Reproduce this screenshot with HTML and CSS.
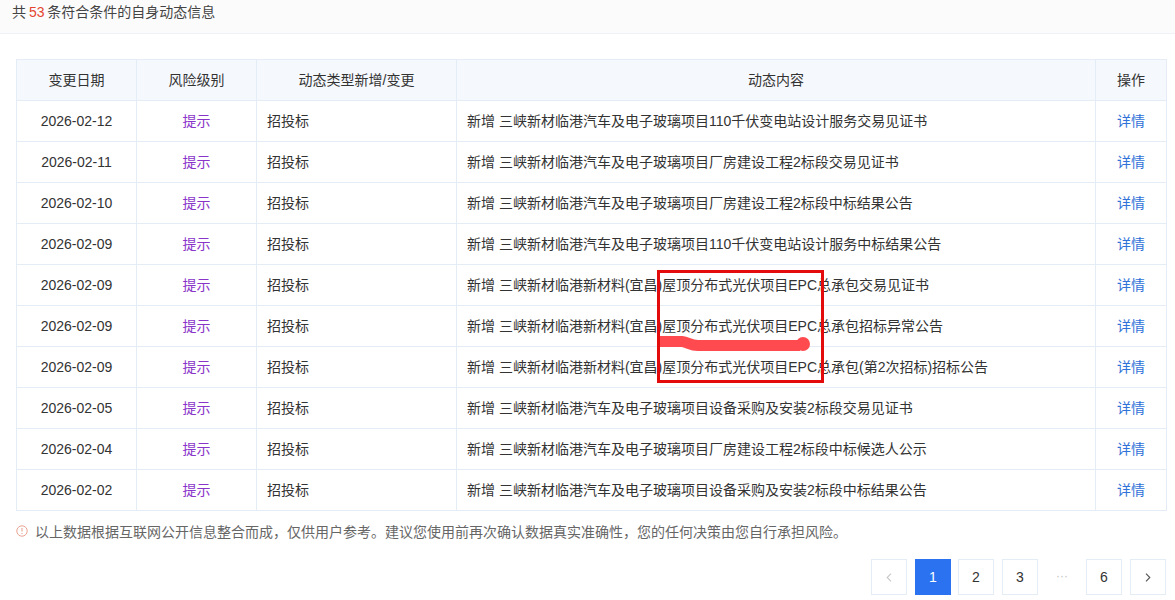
FILE: index.html
```html
<!DOCTYPE html>
<html lang="zh">
<head>
<meta charset="utf-8">
<title>动态信息</title>
<link rel="stylesheet" href="styles.css">
</head>
<body>
<div class="summary">共 <span class="count">53</span> 条符合条件的自身动态信息</div>
<main class="content">
<table class="table">
<colgroup><col class="c1"><col class="c2"><col class="c3"><col class="c4"><col class="c5"></colgroup>
<thead><tr><th>变更日期</th><th>风险级别</th><th>动态类型新增/变更</th><th>动态内容</th><th>操作</th></tr></thead>
<tbody>
<tr><td class="center">2026-02-12</td><td class="center risk">提示</td><td>招投标</td><td>新增 三峡新材临港汽车及电子玻璃项目110千伏变电站设计服务交易见证书</td><td class="center link">详情</td></tr>
<tr><td class="center">2026-02-11</td><td class="center risk">提示</td><td>招投标</td><td>新增 三峡新材临港汽车及电子玻璃项目厂房建设工程2标段交易见证书</td><td class="center link">详情</td></tr>
<tr><td class="center">2026-02-10</td><td class="center risk">提示</td><td>招投标</td><td>新增 三峡新材临港汽车及电子玻璃项目厂房建设工程2标段中标结果公告</td><td class="center link">详情</td></tr>
<tr><td class="center">2026-02-09</td><td class="center risk">提示</td><td>招投标</td><td>新增 三峡新材临港汽车及电子玻璃项目110千伏变电站设计服务中标结果公告</td><td class="center link">详情</td></tr>
<tr><td class="center">2026-02-09</td><td class="center risk">提示</td><td>招投标</td><td>新增 三峡新材临港新材料(宜昌)屋顶分布式光伏项目EPC总承包交易见证书</td><td class="center link">详情</td></tr>
<tr><td class="center">2026-02-09</td><td class="center risk">提示</td><td>招投标</td><td>新增 三峡新材临港新材料(宜昌)屋顶分布式光伏项目EPC总承包招标异常公告</td><td class="center link">详情</td></tr>
<tr><td class="center">2026-02-09</td><td class="center risk">提示</td><td>招投标</td><td>新增 三峡新材临港新材料(宜昌)屋顶分布式光伏项目EPC总承包(第2次招标)招标公告</td><td class="center link">详情</td></tr>
<tr><td class="center">2026-02-05</td><td class="center risk">提示</td><td>招投标</td><td>新增 三峡新材临港汽车及电子玻璃项目设备采购及安装2标段交易见证书</td><td class="center link">详情</td></tr>
<tr><td class="center">2026-02-04</td><td class="center risk">提示</td><td>招投标</td><td>新增 三峡新材临港汽车及电子玻璃项目厂房建设工程2标段中标候选人公示</td><td class="center link">详情</td></tr>
<tr><td class="center">2026-02-02</td><td class="center risk">提示</td><td>招投标</td><td>新增 三峡新材临港汽车及电子玻璃项目设备采购及安装2标段中标结果公告</td><td class="center link">详情</td></tr>
</tbody>
</table>
<p class="notice">
<svg class="notice-icon" viewBox="0 0 12 12" aria-hidden="true"><circle cx="6" cy="6" r="5.2" fill="none" stroke="#e9a392" stroke-width="1"/><path d="M6 2.9v3.7M6 8v1.1" fill="none" stroke="#e9a392" stroke-width="1.1"/></svg>
<span>以上数据根据互联网公开信息整合而成，仅供用户参考。建议您使用前再次确认数据真实准确性，您的任何决策由您自行承担风险。</span>
</p>
<nav class="pager">
<span class="page disabled"><svg class="arrow" viewBox="0 0 6 9"><path d="M5 .7 1.2 4.5 5 8.3" fill="none" stroke="#c8c8c8" stroke-width="1.1"/></svg></span>
<span class="page active">1</span>
<span class="page">2</span>
<span class="page">3</span>
<span class="page dots">···</span>
<span class="page">6</span>
<span class="page"><svg class="arrow" viewBox="0 0 6 9"><path d="M1 .7 4.8 4.5 1 8.3" fill="none" stroke="#555" stroke-width="1.1"/></svg></span>
</nav>
</main>
<svg class="marks" width="1175" height="600" viewBox="0 0 1175 600" aria-hidden="true">
<rect x="658.5" y="271.5" width="164" height="110" fill="none" stroke="#e30b0b" stroke-width="3"/>
<path d="M660 341.5 H682 C688 342 690 345.5 698 345.5 H800" fill="none" stroke="#ff4b4f" stroke-width="11" stroke-linejoin="round"/>
<circle cx="803" cy="344" r="7" fill="#ff4b4f"/>
</svg>
</body>
</html>
```
FILE: styles.css
```css
* { box-sizing: border-box; }
html, body { margin: 0; padding: 0; background: #fff; }
body {
  width: 1175px;
  height: 600px;
  overflow: hidden;
  position: relative;
  font-family: "Liberation Sans", "Noto Sans CJK SC", sans-serif;
  font-size: 14px;
  color: #333;
}
.summary {
  height: 34px;
  padding: 3px 12px 0;
  font-size: 14px;
  line-height: 18px;
  word-spacing: -1px;
  background: #fbfbfb;
  border-bottom: 1px solid #eef1f5;
  color: #444;
}
.count { color: #e5452f; }
.content { padding: 25px 9px 0 16px; }
.table {
  width: 1150px;
  border-collapse: collapse;
  table-layout: fixed;
}
.c1, .c2 { width: 120px; }
.c3 { width: 200px; }
.c4 { width: 639px; }
.c5 { width: 71px; }
th, td {
  height: 41px;
  padding: 0 10px;
  border: 1px solid #e4ecf6;
  font-weight: 400;
  line-height: 20px;
  white-space: nowrap;
  overflow: hidden;
}
th { background: #f5f8fd; text-align: center; }
td { text-align: left; }
td.center { text-align: center; }
.risk { color: #8a35c9; }
.link { color: #2f72d8; }
.notice {
  display: flex;
  align-items: center;
  gap: 7px;
  height: 20px;
  margin: 10px 0 0;
  font-size: 14px;
  color: #666;
}
.notice-icon { width: 12px; height: 12px; flex: none; }
.pager {
  display: flex;
  justify-content: flex-end;
  gap: 8px;
  margin-top: 18px;
  width: 1150px;
}
.page {
  width: 36px;
  height: 36px;
  display: flex;
  align-items: center;
  justify-content: center;
  border: 1px solid #e4ecf6;
  font-size: 14px;
  color: #333;
  background: #fff;
}
.page.active { background: #2a72f0; border-color: #2a72f0; color: #fff; margin-right: -1px; }
.page.dots { border: 0; color: #c4c4c4; width: 32px; font-size: 12px; padding-bottom: 3px; }
.arrow { width: 6px; height: 9px; }
.marks { position: absolute; left: 0; top: 0; pointer-events: none; }
```
